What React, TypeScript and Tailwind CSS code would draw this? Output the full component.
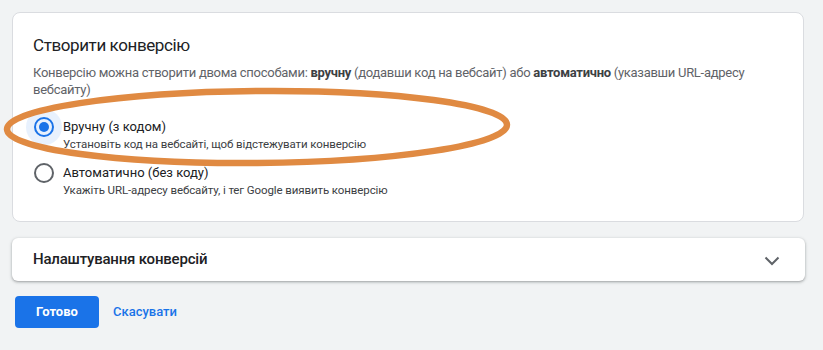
import React, { useState } from "react";

const font = { fontFamily: "Roboto, 'Noto Sans', sans-serif" };

type Option = {
  id: string;
  label: string;
  hint: string;
};

const options: Option[] = [
  {
    id: "manual",
    label: "Вручну (з кодом)",
    hint: "Установіть код на вебсайті, щоб відстежувати конверсію",
  },
  {
    id: "auto",
    label: "Автоматично (без коду)",
    hint: "Укажіть URL-адресу вебсайту, і тег Google виявить конверсію",
  },
];

const RadioRow: React.FC<{
  option: Option;
  checked: boolean;
  onSelect: () => void;
}> = ({ option, checked, onSelect }) => (
  <div className="flex items-start cursor-pointer" onClick={onSelect}>
    <div className="relative w-[20px] h-[18px] ml-[1px] mr-[9px] flex items-center justify-center">
      {checked && (
        <span className="absolute w-[36px] h-[36px] rounded-full bg-[#1a73e8]/10" />
      )}
      <span
        className={`relative w-[20px] h-[20px] rounded-full border-2 flex items-center justify-center ${
          checked ? "border-[#1a73e8]" : "border-[#5f6368]"
        }`}
      >
        {checked && <span className="w-[10px] h-[10px] rounded-full bg-[#1a73e8]" />}
      </span>
    </div>
    <div>
      <div className="text-[13px] leading-[18px] text-[#202124]">{option.label}</div>
      <div className="text-[11.5px] leading-[16px] tracking-[-0.1px] text-[#3c4043]">
        {option.hint}
      </div>
    </div>
  </div>
);

export default function App() {
  const [selected, setSelected] = useState("manual");
  const [open, setOpen] = useState(false);

  return (
    <div className="relative w-[823px] h-[350px] bg-[#f1f3f4] p-3" style={font}>
      {/* Create conversion card */}
      <div className="w-[792px] h-[210px] bg-white border border-[#dadce0] rounded-lg pl-[20px] pr-6 pt-[20px]">
        <h2 className="text-[17px] leading-[24px] tracking-[-0.4px] text-[#202124] font-normal">
          Створити конверсію
        </h2>
        <p className="mt-[7px] text-[13px] leading-[17px] tracking-[-0.28px] text-[#5f6368]">
          Конверсію можна створити двома способами:{" "}
          <b className="font-bold text-[#3c4043]">вручну</b> (додавши код на вебсайт) або{" "}
          <b className="font-bold text-[#3c4043]">автоматично</b> (указавши URL-адресу
          вебсайту)
        </p>
        <div className="mt-[20px] flex flex-col gap-[12px]">
          {options.map((o) => (
            <RadioRow
              key={o.id}
              option={o}
              checked={selected === o.id}
              onSelect={() => setSelected(o.id)}
            />
          ))}
        </div>
      </div>

      {/* Settings accordion */}
      <div
        className="mt-[16px] w-[793px] h-[43px] bg-white rounded-md shadow-[0_1px_2px_rgba(60,64,67,0.3),0_1px_3px_1px_rgba(60,64,67,0.15)] flex items-center justify-between pl-[21px] pr-[25px] cursor-pointer"
        onClick={() => setOpen(!open)}
      >
        <span className="text-[15px] font-medium tracking-[-0.2px] text-[#202124]">
          Налаштування конверсій
        </span>
        <svg
          width="16"
          height="10"
          viewBox="0 0 16 10"
          className={`mt-[3px] ${open ? "rotate-180" : ""}`}
        >
          <path d="M1.5 1.5 L8 8 L14.5 1.5" fill="none" stroke="#5f6368" strokeWidth="2" />
        </svg>
      </div>

      {/* Actions */}
      <div className="mt-[15px] ml-[3px] flex items-center gap-[14px]">
        <button className="w-[84px] h-[32px] rounded bg-[#1a73e8] text-white text-[13px] font-bold">
          Готово
        </button>
        <button className="text-[13px] font-medium text-[#1a73e8]">Скасувати</button>
      </div>

      {/* Orange annotation ellipse */}
      <svg
        className="absolute left-0 top-0 pointer-events-none"
        width="823"
        height="350"
      >
        <ellipse
          cx="257"
          cy="127"
          rx="250"
          ry="36"
          fill="none"
          stroke="#e08a42"
          strokeWidth="6.5"
          transform="rotate(-0.5 257 127)"
        />
      </svg>
    </div>
  );
}
